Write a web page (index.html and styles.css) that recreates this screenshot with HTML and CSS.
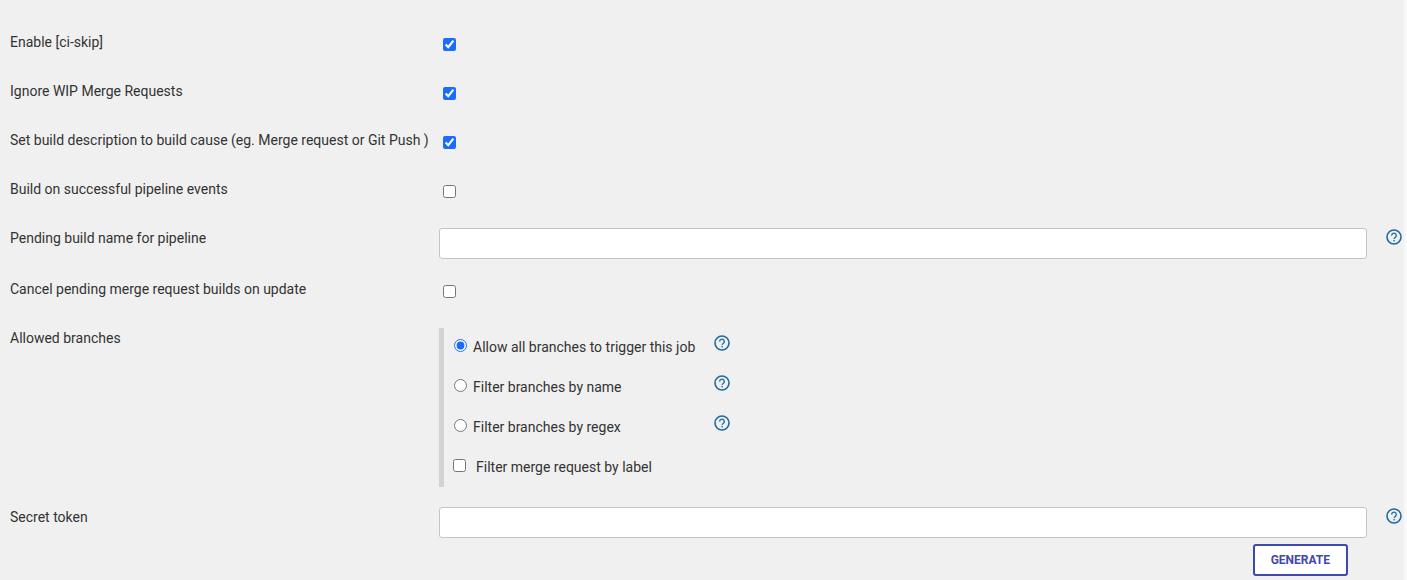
FILE: index.html
```html
<!DOCTYPE html>
<html lang="en">
<head>
<meta charset="utf-8">
<title>Build triggers</title>
<link rel="stylesheet" href="styles.css">
</head>
<body>

<svg class="sprite" aria-hidden="true">
	<symbol id="icon-help" viewBox="0 0 16 16">
		<circle cx="8" cy="8" r="7" fill="none" stroke="currentColor" stroke-width="1.6"/>
		<path d="M5.7 6.6a2.3 2.3 0 1 1 3.7 1.7c-.8.6-1.3.9-1.3 1.8" fill="none" stroke="currentColor" stroke-width="1.3"/>
		<rect x="7.4" y="11" width="1.4" height="1.4" fill="currentColor"/>
	</symbol>
</svg>

<form class="config">
	<div class="row">
		<label class="name" for="ciskip">Enable [ci-skip]</label>
		<div class="setting"><input type="checkbox" id="ciskip" checked></div>
	</div>
	<div class="row">
		<label class="name" for="wip">Ignore WIP Merge Requests</label>
		<div class="setting"><input type="checkbox" id="wip" checked></div>
	</div>
	<div class="row">
		<label class="name" for="description">Set build description to build cause (eg. Merge request or Git Push )</label>
		<div class="setting"><input type="checkbox" id="description" checked></div>
	</div>
	<div class="row">
		<label class="name" for="pipeline">Build on successful pipeline events</label>
		<div class="setting"><input type="checkbox" id="pipeline"></div>
	</div>
	<div class="row">
		<label class="name" for="pending">Pending build name for pipeline</label>
		<div class="setting"><input type="text" class="text" id="pending"></div>
		<a class="help" href="#pending" aria-label="Help for pending build name"><svg><use href="#icon-help"/></svg></a>
	</div>
	<div class="row">
		<label class="name" for="cancel">Cancel pending merge request builds on update</label>
		<div class="setting"><input type="checkbox" id="cancel"></div>
	</div>
	<div class="row">
		<div class="name" id="branches">Allowed branches</div>
		<div class="setting">
			<div class="branches" role="radiogroup" aria-labelledby="branches">
				<label class="option"><input type="radio" name="branch" checked>Allow all branches to trigger this job</label>
				<a class="help" href="#branches" aria-label="Help for all branches"><svg><use href="#icon-help"/></svg></a>
				<label class="option"><input type="radio" name="branch">Filter branches by name</label>
				<a class="help" href="#branches" aria-label="Help for filter by name"><svg><use href="#icon-help"/></svg></a>
				<label class="option"><input type="radio" name="branch">Filter branches by regex</label>
				<a class="help" href="#branches" aria-label="Help for filter by regex"><svg><use href="#icon-help"/></svg></a>
				<label class="option"><input type="checkbox">Filter merge request by label</label>
			</div>
		</div>
	</div>
	<div class="row">
		<label class="name" for="token">Secret token</label>
		<div class="setting">
			<input type="text" class="text" id="token">
			<div class="actions"><button type="button" class="button">GENERATE</button></div>
		</div>
		<a class="help" href="#token" aria-label="Help for secret token"><svg><use href="#icon-help"/></svg></a>
	</div>
</form>

</body>
</html>
```

FILE: styles.css
```css
* {
	box-sizing: border-box;
}
body {
	margin: 0;
	padding-right: 3px;
	background: #f8f8f8;
	color: #333;
	font-family: Roboto, "Liberation Sans", sans-serif;
	font-size: 14px;
	line-height: 20px;
}
.sprite {
	display: none;
}
.config {
	display: flex;
	flex-direction: column;
	gap: 20px;
	min-height: 100vh;
	padding: 32px 2px 4px 10px;
	background: #f0f0f0;
}
.row {
	display: grid;
	grid-template-columns: 429px 1fr 16px;
	column-gap: 0;
}
.setting {
	min-height: 29px;
	margin-right: 19px;
}
input[type=checkbox],
input[type=radio] {
	display: block;
	flex: none;
	width: 13px;
	height: 13px;
	margin: 0;
	accent-color: #1a6cff;
}
.setting > input[type=checkbox] {
	margin: 6px 0 0 4px;
}
.text {
	display: block;
	width: 100%;
	height: 31px;
	padding: 4px 8px;
	border: 1px solid #c4c4c4;
	border-radius: 3px;
	background: #fff;
	font: inherit;
}
.help {
	width: 16px;
	height: 16px;
	margin-top: 1px;
	color: #1f6a9f;
}
.help svg {
	display: block;
	width: 16px;
	height: 16px;
}
.branches {
	display: grid;
	grid-template-columns: max-content 16px;
	grid-auto-rows: 40px;
	column-gap: 19px;
	height: 159px;
	padding: 6px 0 0 10px;
	border-left: 5px solid #d3d3d3;
}
.option {
	display: flex;
	align-items: flex-start;
	gap: 6px;
	padding-top: 3px;
}
.option input[type=radio],
.option input[type=checkbox] {
	margin-top: 2px;
}
.option input[type=checkbox] {
	margin-left: -1px;
	margin-right: 4px;
}
.actions {
	display: flex;
	justify-content: flex-end;
	padding: 6px 19px 0 0;
}
.button {
	height: 32px;
	padding: 0 16px;
	border: 2px solid #3f48b0;
	border-radius: 3px;
	background: #fff;
	color: #3f48b0;
	font: bold 12px Roboto, "Liberation Sans", sans-serif;
}
```
